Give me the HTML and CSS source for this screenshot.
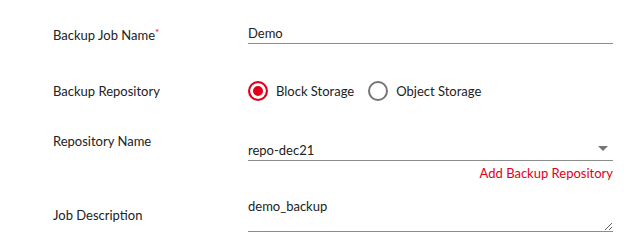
FILE: index.html
```html
<!DOCTYPE html>
<html>
<head>
    <title>Backup Job</title>
    <link rel="stylesheet" href="styles.css">
</head>
<body>
    <form id="form_backup">
        <div class="row row_name">
            <label class="label_field">Backup Job Name<span class="required">*</span></label>
            <input type="text" class="input_line" value="Demo">
        </div>
        <div class="row row_repo">
            <span class="label_field">Backup Repository</span>
            <div class="radio_group">
                <label class="radio_option">
                    <input type="radio" name="repo_type" value="block" checked>
                    <span>Block Storage</span>
                </label>
                <label class="radio_option">
                    <input type="radio" name="repo_type" value="object">
                    <span>Object Storage</span>
                </label>
            </div>
        </div>
        <div class="row row_repo_name">
            <label class="label_field">Repository Name</label>
            <div class="field_col">
                <div class="select_wrap">
                    <select class="input_line">
                        <option>repo-dec21</option>
                    </select>
                </div>
                <a class="link_add" href="#">Add Backup Repository</a>
            </div>
        </div>
        <div class="row row_desc">
            <label class="label_field">Job Description</label>
            <textarea class="input_line textarea_desc">demo_backup</textarea>
        </div>
    </form>
</body>
</html>
```
FILE: styles.css
```css
* {
    font-family: Lato, 'Open Sans', sans-serif;
    box-sizing: border-box;
}
body {
    margin: 0;
    background: #fff;
    color: #222;
    font-size: 13px;
}
#form_backup {
    padding: 22px 0 0 53px;
}
.row {
    display: flex;
    align-items: flex-start;
}
.label_field {
    width: 195px;
    height: 20px;
    line-height: 20px;
    color: #222;
}
.required {
    position: relative;
    top: -4px;
    line-height: 0;
    color: #e0001b;
    font-size: 10px;
}
.input_line {
    width: 365px;
    height: 22px;
    border: none;
    border-bottom: 1px solid #8c8c8c;
    padding: 0;
    font-size: 13px;
    color: #222;
    background: transparent;
    outline: none;
}
.row_name .label_field {
    margin-top: 3px;
}
.row_repo {
    margin-top: 36px;
    align-items: center;
}
.radio_group {
    display: flex;
    align-items: center;
    gap: 14px;
}
.radio_option {
    display: flex;
    align-items: center;
    gap: 8px;
}
.radio_option input {
    appearance: none;
    margin: 0;
    width: 20px;
    height: 20px;
    border-radius: 50%;
    border: 2px solid #757575;
    background: #fff;
}
.radio_option input:checked {
    border-color: #e0001b;
    background: #e0001b;
    box-shadow: inset 0 0 0 3px #fff;
}
.row_repo_name {
    margin-top: 30px;
}
.field_col {
    display: flex;
    flex-direction: column;
    align-items: flex-end;
    width: 365px;
}
.select_wrap {
    position: relative;
    margin-top: 9px;
}
.select_wrap select {
    appearance: none;
    height: 21px;
    line-height: 20px;
}
.select_wrap::after {
    content: "";
    position: absolute;
    right: 5px;
    top: 6px;
    border-left: 5px solid transparent;
    border-right: 5px solid transparent;
    border-top: 5px solid #757575;
    pointer-events: none;
}
.link_add {
    margin-top: 4px;
    line-height: 16px;
    color: #e0001b;
    text-decoration: none;
}
.row_desc {
    margin-top: 15px;
}
.row_desc .label_field {
    margin-top: 9px;
}
.textarea_desc {
    height: 36px;
    line-height: 20px;
    resize: vertical;
}
```
